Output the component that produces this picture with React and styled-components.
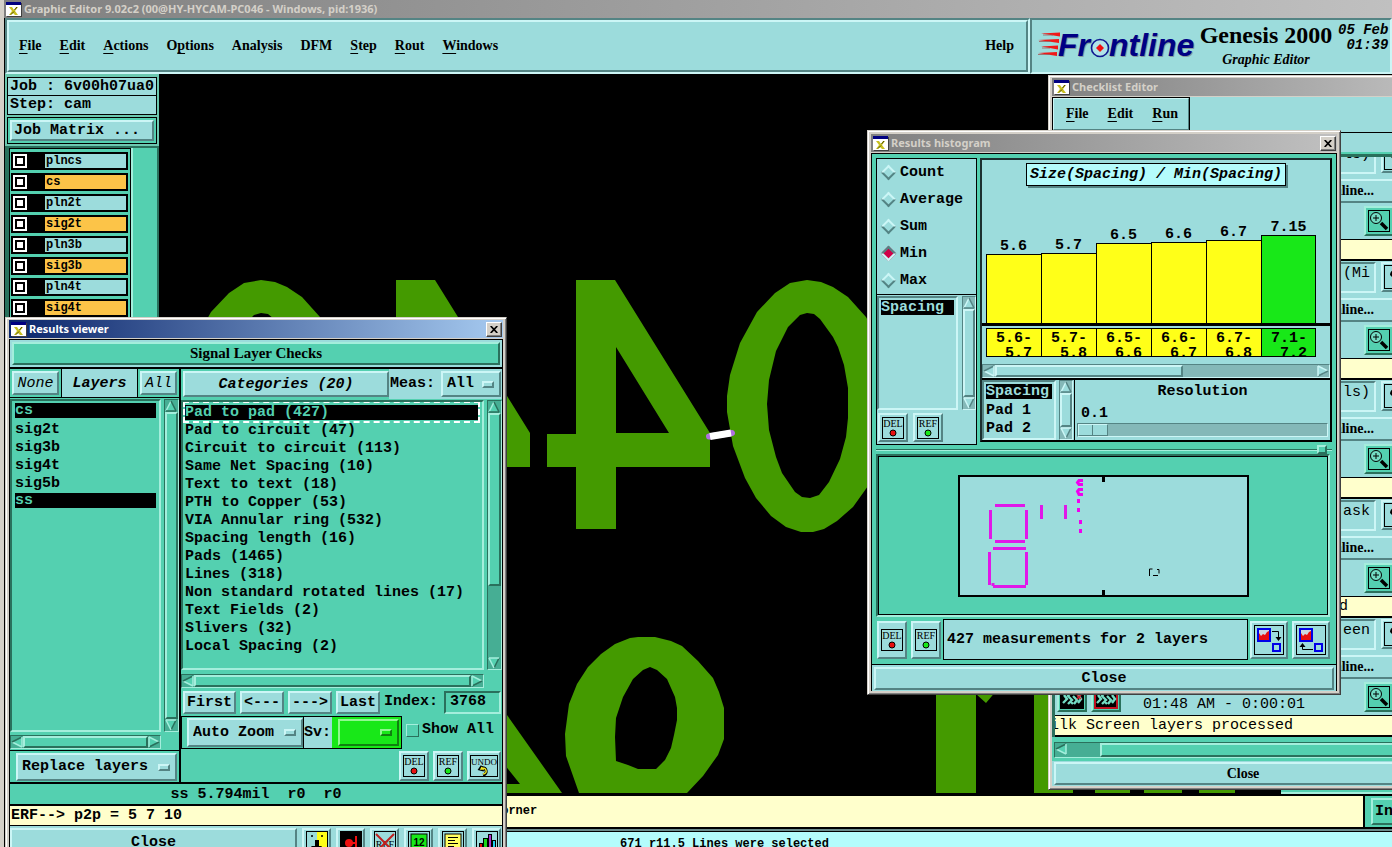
import React from "react";
import styled, { createGlobalStyle, css } from "styled-components";

const MONO = '"Liberation Mono", "Courier New", monospace';
const SERIF = '"Liberation Serif", "Times New Roman", serif';
const SANS = '"Noto Sans", "Open Sans", sans-serif';

const tones = {
  cyan: { face: "#9cdcdc", light: "#ccf6f6", dark: "#548484", trough: "#84b8b8" },
  green: { face: "#54d0b0", light: "#a4eedc", dark: "#2a705c", trough: "#46ae94" },
  lime: { face: "#18e818", light: "#90f890", dark: "#108010", trough: "#18e818" },
};

const GlobalStyle = createGlobalStyle`
  * { box-sizing: border-box; }
  body { margin: 0; background: #000; color: #000; font: bold 15px/18px ${MONO}; overflow: hidden; }
  button, input, select { font: inherit; color: inherit; margin: 0; border-radius: 0; }
  ul { list-style: none; margin: 0; padding: 0; }
`;

const raised = css`
  border: 2px solid;
  border-color: ${(p) => {
    const t = tones[p.$tone || "cyan"];
    return `${t.light} ${t.dark} ${t.dark} ${t.light}`;
  }};
  background: ${(p) => tones[p.$tone || "cyan"].face};
`;
const sunken = css`
  border: 2px solid;
  border-color: ${(p) => {
    const t = tones[p.$tone || "cyan"];
    return `${t.dark} ${t.light} ${t.light} ${t.dark}`;
  }};
  background: ${(p) => tones[p.$tone || "cyan"].face};
`;

/* ---------- main window ---------- */

const Desktop = styled.div`
  position: relative;
  display: flex;
  flex-direction: column;
  height: 100vh;
  min-height: 400px;
  overflow: hidden;
  border-left: 4px solid #d4d0c8;
  background: #000;
`;
const TitleBar = styled.header`
  display: flex;
  align-items: center;
  gap: 2px;
  height: 18px;
  flex: none;
  padding: 0 1px 0 2px;
  font: bold 11px/16px ${SANS};
  white-space: nowrap;
  overflow: hidden;
  color: ${(p) => (p.$active ? "#fff" : "#d4d0c8")};
  background: ${(p) =>
    p.$active ? "linear-gradient(90deg, #0a246a, #a6caf0)" : "linear-gradient(90deg, #808080, #c0c0c0)"};
`;
const TitleText = styled.span`
  flex: 1;
`;
const CloseBox = styled.button`
  display: flex;
  align-items: center;
  justify-content: center;
  width: 16px;
  height: 15px;
  padding: 0;
  border: 1px solid;
  border-color: #fff #404040 #404040 #fff;
  background: #d4d0c8;
  box-shadow: inset -1px -1px #808080;
`;
const TopRow = styled.div`
  display: flex;
  height: 56px;
  flex: none;
  margin-left: 1px;
`;
const MenuFrame = styled.div`
  ${sunken}
  flex: 1;
`;
const MenuBar = styled.nav`
  ${raised}
  display: flex;
  align-items: center;
  height: 100%;
  padding: 0 12px 0 10px;
  gap: 18px;
`;
const MenuItem = styled.button`
  padding: 0;
  border: 0;
  background: none;
  font: bold 14px/18px ${SERIF};
  margin-left: ${(p) => (p.$end ? "auto" : 0)};
  u { text-underline-offset: 3px; text-decoration-thickness: 1px; }
`;
const Brand = styled.div`
  ${sunken}
  display: flex;
  width: 362px;
  padding-left: 4px;
  overflow: hidden;
`;
const Product = styled.div`
  width: 136px;
  flex: none;
  text-align: center;
  font: italic bold 14px/20px ${SERIF};
`;
const ProductName = styled.div`
  font: bold 24px/30px ${SERIF};
  white-space: nowrap;
`;
const Clock = styled.div`
  flex: none;
  margin-left: 4px;
  padding-top: 3px;
  font: italic bold 14px/15px ${MONO};
  white-space: pre;
`;
const Work = styled.main`
  display: flex;
  flex: 1;
  min-height: 0;
  margin-left: 1px;
`;
const Sidebar = styled.aside`
  display: flex;
  flex-direction: column;
  width: 154px;
  flex: none;
  overflow: hidden;
  background: ${tones.green.dark};
`;
const JobPanel = styled.div`
  padding: 3px 2px 2px;
  background: #6cc8b0;
`;
const JobLine = styled.div`
  height: 19px;
  padding-left: 2px;
  border: 1px solid #000;
  background: ${tones.cyan.face};
  line-height: 18px;
  white-space: pre;
  & + & { border-top-width: 0; }
`;
const MatrixFrame = styled.div`
  margin-top: 2px;
  padding: 2px;
  border: 1px solid #000;
  background: ${tones.green.face};
`;
const Button = styled.button`
  ${raised}
  display: flex;
  align-items: center;
  justify-content: ${(p) => (p.$start ? "flex-start" : "center")};
  flex: ${(p) => (p.$grow ? 1 : "none")};
  width: ${(p) => (p.$w ? p.$w + "px" : "auto")};
  height: ${(p) => (p.$h || 23) + "px"};
  padding: ${(p) => (p.$low ? "2px 2px 0" : "0 2px")};
  white-space: pre;
  font-family: ${(p) => (p.$serif ? SERIF : MONO)};
  font-size: ${(p) => (p.$serif ? 14 : 15)}px;
  font-style: ${(p) => (p.$italic ? "italic" : "normal")};
  font-weight: ${(p) => (p.$light ? "normal" : "bold")};
`;
const LayerArea = styled.div`
  display: flex;
  flex: 1;
  gap: 2px;
  margin: 2px 2px 0 4px;
  background: ${tones.green.light};
`;
const LayerPanel = styled.ul`
  display: flex;
  flex-direction: column;
  gap: 3px;
  width: 122px;
  padding: 3px 2px 0 1px;
  border: 1px solid #000;
  border-bottom: 0;
  background: ${tones.green.face};
`;
const LayerGutter = styled.div`
  flex: 1;
  background: ${tones.green.face};
`;
const LayerRow = styled.li`
  display: flex;
  width: 117px;
  height: 18px;
  padding: 2px;
  background: #000;
`;
const LayerCheck = styled.input`
  appearance: none;
  width: 14px;
  height: 14px;
  border: 2px solid #fff;
  background: #fff;
  box-shadow: inset 0 0 0 2px #000;
`;
const LayerName = styled.label`
  flex: 1;
  margin-left: 18px;
  padding-left: 1px;
  background: ${(p) => (p.$signal ? "#fcc448" : tones.cyan.face)};
  font-size: 12px;
  line-height: 14px;
`;
const Canvas = styled.svg`
  flex: 1;
  min-width: 0;
  height: 100%;
  background: #000;
`;
const Footer = styled.footer`
  flex: none;
  margin-left: 1px;
  border-top: 2px solid #000;
  font-size: 12px;
`;
const PromptRow = styled.div`
  display: flex;
  height: 33px;
  border-bottom: 2px solid #000;
  background: #ffffcc;
`;
const PromptText = styled.div`
  flex: 1;
  padding-left: 489px;
  line-height: 30px;
`;
const UnitCell = styled.div`
  width: 29px;
  padding: 2px 0 2px 6px;
  border-left: 2px solid #000;
  background: ${tones.green.face};
  overflow: hidden;
`;
const StatusRow = styled.div`
  height: 18px;
  border-top: 2px solid #6c8c8c;
  padding-top: 4px;
  background: #b4fcfc;
  box-shadow: inset 0 1px #000;
  text-align: center;
  padding-left: 52px;
  line-height: 18px;
  overflow: hidden;
`;

/* ---------- shared window parts ---------- */

const Frame = styled.section`
  position: absolute;
  left: ${(p) => p.$x}px;
  top: ${(p) => p.$y}px;
  width: ${(p) => p.$w}px;
  padding: ${(p) => p.$top || 2}px 3px 3px;
  border: 1px solid;
  border-color: #d4d0c8 #404040 #404040 #d4d0c8;
  background: #d4d0c8;
  box-shadow: inset 1px 1px #fff, inset -1px -1px #808080;
`;
const Content = styled.div`
  margin-top: 1px;
  border: 1px solid #000;
  border-bottom: 0;
  background: ${(p) => tones[p.$tone].face};
`;
const ScrollTrack = styled.div`
  display: flex;
  flex-direction: ${(p) => (p.$vertical ? "column" : "row")};
  align-items: stretch;
  min-width: 0;
  border: 1px solid;
  border-color: ${(p) => `${tones[p.$tone].dark} ${tones[p.$tone].light} ${tones[p.$tone].light} ${tones[p.$tone].dark}`};
  background: ${(p) => tones[p.$tone].trough};
  svg { flex: none; }
`;
const ScrollThumb = styled.div`
  ${raised}
  flex: ${(p) => p.$size || 1};
`;
const ScrollRest = styled.div`
  flex: ${(p) => p.$size};
`;
const List = styled.ul`
  ${sunken}
  min-width: 0;
  padding: 1px ${(p) => p.$pad || 0}px 0;
  overflow: hidden;
`;
const Item = styled.li`
  height: 18px;
  padding-top: ${(p) => (p.$focus ? 2 : 1)}px;
  ${(p) => p.$focus && "margin: 0 4px 0 2px; outline: 2px dashed #fff;"}
`;
const ItemText = styled.span`
  display: block;
  height: 15px;
  line-height: ${(p) => (p.$on ? 16 : 18)}px;
  padding-left: ${(p) => (p.$inset ? 2 : 0)}px;
  white-space: nowrap;
  ${(p) => p.$on && css`background: #000; color: ${tones[p.$tone || "green"].face};`}
`;
const SelectWrap = styled.span`
  ${raised}
  display: flex;
  align-items: center;
  flex: ${(p) => (p.$grow ? 1 : "none")};
  width: ${(p) => (p.$w ? p.$w + "px" : "auto")};
  height: ${(p) => p.$h}px;
  padding-right: 5px;
`;
const Select = styled.select`
  appearance: none;
  flex: 1;
  min-width: 0;
  height: 100%;
  padding: 0 0 0 4px;
  border: 0;
  background: transparent;
`;
const Notch = styled.span`
  ${raised}
  width: 12px;
  height: 7px;
`;

/* ---------- results viewer ---------- */

const Strip = styled.div`
  height: 29px;
  padding: 2px;
  border-bottom: 2px solid #000;
  background: ${tones.cyan.face};
`;
const StripLabel = styled.div`
  ${raised}
  height: 23px;
  text-align: center;
  font: bold 15px/19px ${SERIF};
`;
const Panes = styled.div`
  display: flex;
  border-bottom: 2px solid #000;
`;
const LeftPane = styled.div`
  width: 171px;
  border-right: 2px solid #000;
`;
const RightPane = styled.div`
  flex: 1;
  min-width: 0;
`;
const LeftHead = styled.div`
  display: flex;
  height: 29px;
  border-bottom: 1px solid #000;
`;
const HeadCell = styled.div`
  padding: 2px;
`;
const HeadLabel = styled.div`
  flex: 1;
  border: 1px solid #000;
  border-width: 0 1px;
  background: ${tones.cyan.face};
  text-align: center;
  font-style: italic;
  line-height: 30px;
`;
const ListGrid = styled.div`
  display: grid;
  grid-template-columns: minmax(0, 1fr) 15px;
  grid-template-rows: ${(p) => p.$h}px 14px;
  gap: ${(p) => p.$gap || 3}px 3px;
  padding: 1px 0 ${(p) => p.$bottom || 0}px;
`;
const ReplaceRow = styled.div`
  display: flex;
  height: 32px;
  padding: 2px 2px 1px 6px;
  border-top: 1px solid #000;
`;
const RightHead = styled.div`
  display: flex;
  height: 30px;
`;
const CategoryCell = styled.div`
  display: flex;
  width: 208px;
  padding: 2px 0 2px 2px;
`;
const MeasCell = styled.div`
  display: flex;
  flex: 1;
  align-items: center;
  justify-content: space-between;
  padding-right: 1px;
  padding-left: 1px;
  background: ${tones.cyan.face};
`;
const NavRow = styled.div`
  display: flex;
  align-items: center;
  gap: 4px;
  height: 28px;
  padding: 0 1px 0 2px;
`;
const IndexField = styled.input`
  ${sunken}
  flex: 1;
  min-width: 0;
  height: 23px;
  margin-left: 2px;
  padding: 0 0 2px 4px;
`;
const ZoomRow = styled.div`
  display: flex;
  align-items: center;
  gap: 4px;
  height: 33px;
`;
const ZoomBox = styled.div`
  display: flex;
  width: 221px;
  height: 33px;
  border: 1px solid #000;
`;
const ZoomCell = styled.div`
  display: flex;
  flex: 1;
  padding: 1px 0 1px 5px;
  border-right: 1px solid #000;
`;
const SvLabel = styled.label`
  width: 28px;
  background: ${tones.cyan.face};
  line-height: 32px;
`;
const SvCell = styled.div`
  display: flex;
  width: 69px;
  padding: 2px 2px 2px 6px;
  background: ${tones.lime.face};
`;
const CheckLabel = styled.label`
  display: flex;
  align-items: center;
  gap: 3px;
  height: 28px;
  align-self: flex-start;
  white-space: nowrap;
`;
const Check = styled.input`
  ${raised}
  appearance: none;
  width: 13px;
  height: 13px;
  border-width: 1px;
`;
const ActionRow = styled.div`
  display: flex;
  justify-content: flex-end;
  gap: 4px;
  height: 33px;
  padding: 2px 1px 1px;
`;
const IconButton = styled.button`
  ${raised}
  display: flex;
  align-items: center;
  justify-content: center;
  flex: none;
  width: ${(p) => p.$w || 30}px;
  height: ${(p) => p.$h || 30}px;
  padding: 0;
`;
const InfoLine = styled.div`
  height: 22px;
  border-bottom: 2px solid #000;
  text-align: center;
  line-height: 22px;
  white-space: pre;
`;
const ErfLine = styled.div`
  height: 20px;
  padding-left: 1px;
  border-bottom: 1px solid #000;
  background: #ffffcc;
  line-height: 20px;
`;
const CloseRow = styled.div`
  display: flex;
  gap: 5px;
  padding: 2px 1px 1px 0;
  background: ${tones.cyan.face};
`;

/* ---------- histogram ---------- */

const HistBody = styled.div`
  padding: 4px 4px 2px;
`;
const HistTop = styled.div`
  display: flex;
  align-items: flex-start;
  gap: 3px;
  height: 287px;
`;
const HistLeft = styled.div`
  width: 101px;
  height: 287px;
  border: 1px solid #000;
  background: ${tones.cyan.face};
`;
const RadioSet = styled.fieldset`
  margin: 0;
  padding: 0;
  border: 0;
  border-bottom: 1px solid #000;
`;
const RadioLabel = styled.label`
  display: flex;
  align-items: center;
  gap: 6px;
  height: 27px;
  padding-left: 6px;
`;
const Diamond = styled.input`
  appearance: none;
  width: 11px;
  height: 11px;
  border: 2px solid;
  border-color: ${tones.cyan.light} ${tones.cyan.dark} ${tones.cyan.dark} ${tones.cyan.light};
  transform: rotate(45deg);
  &:checked {
    background: #d00048;
    border-color: ${tones.cyan.dark} ${tones.cyan.light} ${tones.cyan.light} ${tones.cyan.dark};
  }
`;
const HistLists = styled.div`
  display: grid;
  grid-template-columns: minmax(0, 1fr) 14px;
  gap: 4px;
  height: 115px;
  padding-top: 1px;
`;
const PairRow = styled.div`
  display: flex;
  gap: 5px;
  padding: 3px 1px 0;
`;
const HistRight = styled.div`
  flex: 1;
  min-width: 0;
  border: 2px solid #000;
  border-color: #1c3030 #000 #000 #1c3030;
  background: ${tones.cyan.face};
`;
const ChartArea = styled.div`
  display: flex;
  flex-direction: column;
  justify-content: space-between;
  height: 166px;
  padding-top: 3px;
  border-bottom: 3px solid #000;
`;
const ChartTitle = styled.div`
  align-self: center;
  padding: 0 3px;
  border: 1px solid #000;
  background: #b4fcfc;
  box-shadow: 2px 2px ${tones.cyan.dark};
  font-style: italic;
  line-height: 21px;
`;
const Bars = styled.div`
  display: flex;
  align-items: flex-end;
  padding-left: 4px;
`;
const BarColumn = styled.div`
  width: 55px;
  text-align: center;
  line-height: 14px;
`;
const Bar = styled.div`
  border: 1px solid #000;
  border-width: 1px 0 0 1px;
  background: ${(p) => (p.$last ? "#18e818" : "#ffff18")};
  border-right-width: ${(p) => (p.$last ? "1px" : 0)};
`;
const Ranges = styled.div`
  display: flex;
  padding: 2px 0 7px 4px;
`;
const Range = styled.div`
  width: 55px;
  height: 29px;
  padding: 2px 0 0 9px;
  border: 1px solid #000;
  border-right-width: ${(p) => (p.$last ? "1px" : 0)};
  background: ${(p) => (p.$last ? "#18e818" : "#ffff18")};
  line-height: 15px;
  white-space: pre;
`;
const HistLower = styled.div`
  display: grid;
  grid-template-columns: 74px 14px minmax(0, 1fr);
  gap: 3px;
  height: 62px;
  border-top: 2px solid #000;
`;
const Resolution = styled.label`
  display: block;
  padding: 3px 2px 0;
  margin-left: -2px;
  border-left: 1px solid #000;
  text-align: center;
`;
const ResolutionValue = styled.div`
  padding-left: 4px;
  height: 22px;
  text-align: left;
  line-height: 26px;
`;
const Slider = styled.input`
  appearance: none;
  display: block;
  width: 100%;
  height: 14px;
  border: 1px solid;
  border-color: ${tones.cyan.dark} ${tones.cyan.light} ${tones.cyan.light} ${tones.cyan.dark};
  background: ${tones.cyan.trough};
  &::-webkit-slider-thumb {
    appearance: none;
    width: 30px;
    height: 12px;
    border: 1px solid;
    border-color: ${tones.cyan.light} ${tones.cyan.dark} ${tones.cyan.dark} ${tones.cyan.light};
    background: linear-gradient(90deg, transparent 13px, ${tones.cyan.dark} 13px 14px, transparent 14px) ${tones.cyan.face};
  }
`;
const SashRow = styled.div`
  display: flex;
  justify-content: flex-end;
  height: 9px;
  padding-right: 5px;
  background: linear-gradient(${tones.green.dark} 0 1px, ${tones.green.light} 1px 2px) 0 4px / 100% 2px no-repeat;
`;
const Sash = styled.span`
  ${raised}
  width: 10px;
  height: 9px;
`;
const Preview = styled.div`
  ${sunken}
  height: 163px;
  margin-right: 2px;
  padding-top: 19px;
  text-align: center;
  box-shadow: inset 1px 1px #000, inset -1px -1px #000;
`;
const MeasureRow = styled.div`
  display: flex;
  align-items: center;
  gap: 4px;
  padding: 2px 2px 2px 1px;
`;
const MeasureText = styled.div`
  flex: 1;
  height: 41px;
  padding-left: 3px;
  margin: 0 -2px;
  border: 1px solid #000;
  background: ${tones.cyan.face};
  line-height: 40px;
`;
const CloseStrip = styled.div`
  display: flex;
  padding: 2px 2px 1px;
  border-top: 1px solid #000;
  background: ${tones.cyan.face};
`;

/* ---------- checklist ---------- */

const CheckBody = styled.div`
  margin-top: 1px;
  background: ${tones.cyan.face};
`;
const SmallMenu = styled.nav`
  ${raised}
  display: flex;
  align-items: center;
  gap: 19px;
  width: 138px;
  height: 34px;
  padding-left: 12px;
  outline: 1px solid #000;
  outline-offset: -1px;
`;
const CheckHead = styled.div`
  height: 25px;
  margin-top: 1px;
  border-top: 1px solid #000;
  border-bottom: 3px solid ${tones.green.dark};
  box-shadow: inset 0 -2px ${tones.green.face};
`;
const Viewport = styled.div`
  display: flex;
  flex-direction: column;
  justify-content: flex-end;
  height: 580px;
  overflow: hidden;
  border-left: 3px solid ${tones.green.dark};
`;
const CheckItem = styled.div`
  flex: none;
  height: 119px;
`;
const NameRow = styled.div`
  display: flex;
  gap: 5px;
  height: 37px;
  padding: 1px 21px 5px 2px;
`;
const NameField = styled.input`
  ${sunken}
  flex: 1;
  min-width: 0;
  padding: 0 4px 8px;
  text-align: right;
  font-weight: normal;
`;
const StateRow = styled.div`
  height: 24px;
  padding-right: 58px;
  border-top: 2px solid ${tones.cyan.light};
  border-bottom: 2px solid ${tones.cyan.dark};
  text-align: right;
  font: bold 14px/20px ${SERIF};
`;
const RunRow = styled.div`
  display: flex;
  align-items: center;
  gap: 4px;
  height: 36px;
  padding: 0 38px 0 2px;
`;
const RunTime = styled.span`
  margin: 16px auto 0 18px;
  font-weight: normal;
`;
const Spacer = styled.span`
  flex: 1;
`;
const Report = styled.div`
  height: 22px;
  padding-right: 84px;
  border-top: 1px solid #000;
  border-bottom: 2px solid #000;
  background: #ffffcc;
  font-weight: normal;
  text-align: ${(p) => (p.$scrolled ? "left" : "right")};
  text-indent: ${(p) => (p.$scrolled ? "-14px" : 0)};
  line-height: 19px;
  white-space: nowrap;
`;
const CheckScroll = styled.div`
  display: flex;
  height: 24px;
  padding: 5px 2px 3px;
  background: ${tones.green.face};
`;
const WideTrack = styled(ScrollTrack)`
  flex: 1;
`;
const CheckClose = styled.div`
  display: flex;
  padding: 1px 0 1px 2px;
`;

/* ---------- icons ---------- */

const AppIcon = () => (
  <svg width="16" height="15" viewBox="0 0 16 15" aria-hidden="true">
    <rect x="1" y="1" width="15" height="14" fill="#404040" />
    <rect width="15" height="14" fill="#fff" />
    <rect width="15" height="3" fill="#000080" />
    <path d="M3 5h3l2 3 2-3h2l-3 4 3 4h-3l-2-2-2 2H3l3-4z" fill="#c8c020" />
    <path d="M5 12.500l3-3M8.500 8l2.500-3" stroke="#505000" />
  </svg>
);
const CloseGlyph = () => (
  <svg width="8" height="7" viewBox="0 0 8 7" aria-hidden="true">
    <path d="M.7 0l6.600 7M7.300 0L.7 7" stroke="#000" strokeWidth="1.700" />
  </svg>
);

const Arrow = ({ dir, tone }) => {
  const t = tones[tone];
  const turn = { up: 0, right: 90, down: 180, left: 270 }[dir];
  return (
    <svg width="12" height="12" viewBox="0 0 12 12" aria-hidden="true">
      <g transform={`rotate(${turn} 6 6)`}>
        <path d="M6 1L11 11H1z" fill={t.face} />
        <path d="M1 11L6 1" stroke={dir === "down" ? t.dark : t.light} strokeWidth="1.500" />
        <path d="M6 1l5 10" stroke={dir === "down" ? t.light : t.dark} strokeWidth="1.500" />
        <path d="M1 11h10" stroke={dir === "up" ? t.dark : t.light} strokeWidth="1.500" />
      </g>
    </svg>
  );
};

const Scrollbar = ({ vertical, tone = "green", thumb = 1, rest = 0 }) => (
  <ScrollTrack $vertical={vertical} $tone={tone}>
    <Arrow dir={vertical ? "up" : "left"} tone={tone} />
    <ScrollThumb $tone={tone} $size={thumb} />
    {rest > 0 && <ScrollRest $size={rest} />}
    <Arrow dir={vertical ? "down" : "right"} tone={tone} />
  </ScrollTrack>
);

const TagIcon = ({ label, color, wide }) => {
  const w = wide ? 28 : 22;
  return (
    <svg width={w} height="24" viewBox={`0 0 ${w} 24`} aria-hidden="true">
      <rect x=".5" y="1.500" width={w - 1} height="21" fill="none" stroke="#000" />
      <text x={w / 2} y="11" textAnchor="middle" fontFamily="Liberation Serif, serif" fontWeight="normal" fontSize={wide ? 9 : 10}>
        {label}
      </text>
      {color ? (
        <circle cx={w / 2} cy="17" r="3" fill={color} stroke="#000" />
      ) : (
        <g fill="none" transform="translate(1 0)">
          <path d="M11 12l-2 3 4 1M10 14c6-1 7 6 2 7" stroke="#000" strokeWidth="3" />
          <path d="M11 13l-1 2 3 0M10 14c6-1 7 6 2 6" stroke="#f0e820" strokeWidth="1.400" />
        </g>
      )}
    </svg>
  );
};

const ChartSwapIcon = ({ back }) => (
  <svg width="30" height="30" viewBox="0 0 30 30" aria-hidden="true">
    <rect x=".5" y=".5" width="29" height="29" fill="none" stroke="#000" />
    <rect x="4" y="4" width="12" height="12" fill="#ccd8e0" stroke="#0000e8" strokeWidth="2" />
    <path d="M5 15V8l2 3 2-2 2 1 2-3 2-1v9z" fill="#e81010" />
    <rect x="19" y="19" width="7" height="7" fill="none" stroke="#0000e8" strokeWidth="2" />
    {back ? (
      <g>
        <path d="M17 24.500H6.500V20" fill="none" stroke="#000" />
        <path d="M6.500 18l3 4h-6z" />
      </g>
    ) : (
      <g>
        <path d="M18 6.500h6.500V12" fill="none" stroke="#000" />
        <path d="M24.500 16l3-4h-6z" />
      </g>
    )}
  </svg>
);

const MagnifierIcon = () => (
  <svg width="22" height="22" viewBox="0 0 22 22" aria-hidden="true">
    <rect x=".5" y=".5" width="21" height="21" fill="none" stroke="#000" />
    <circle cx="8" cy="8" r="5.500" fill="#74dcc4" stroke="#000" />
    <path d="M8 5v6M5 8h6" stroke="#000" />
    <path d="M13 13l6 6" stroke="#000" strokeWidth="3.600" />
  </svg>
);
const HandIcon = () => (
  <svg width="24" height="24" viewBox="0 0 24 24" aria-hidden="true">
    <rect x=".5" y=".5" width="23" height="23" fill="none" stroke="#000" />
    <path d="M6 10c0-7 10-7 10 0v3H9z" />
  </svg>
);
const GearIcon = ({ red }) => (
  <svg width="24" height="24" viewBox="0 0 24 24" aria-hidden="true">
    <rect x="1" y="1" width="22" height="22" fill="#000" stroke={red ? "#c01020" : "#000"} strokeWidth="2" />
    <path d="M3 18l4-4-3-4M8 19l4-4-4-4 3-4M13 19l-2-2M13 11l4 4-3 4M18 10l3 4-3 4" fill="none" stroke="#74dcc4" strokeWidth="2.400" />
    {!red && <path d="M17 10l4 4m0-4l-4 4" stroke="#d02030" strokeWidth="1.500" />}
  </svg>
);

const tools = {
  split: (
    <g>
      <rect x="11" y="1" width="10" height="22" fill="#ffff18" />
      <path d="M9 9h4v6h3l-5 7-6-7h4z" />
      <circle cx="6" cy="5" r="1" /><circle cx="16" cy="5" r="1" />
    </g>
  ),
  dot: (
    <g>
      <rect x="1" y="1" width="20" height="22" />
      <circle cx="9" cy="12" r="4" fill="#f01010" />
      <path d="M16 5v14M10 12h6" stroke="#f01010" strokeWidth="2" />
    </g>
  ),
  ref: (
    <g>
      <text x="11" y="17" textAnchor="middle" fontFamily="Liberation Serif, serif" fontWeight="normal" fontSize="10">REF</text>
      <path d="M2 3l18 18M20 3L2 21" stroke="#c02020" strokeWidth="2" />
    </g>
  ),
  half: (
    <g>
      <rect x="3" y="3" width="16" height="18" fill="#18e818" stroke="#000" />
      <text x="11" y="15" textAnchor="middle" fontFamily="Liberation Sans, sans-serif" fontSize="10">12</text>
    </g>
  ),
  page: (
    <g>
      <rect x="3" y="3" width="16" height="18" fill="#ffff60" stroke="#000" />
      <path d="M6 6.500h10M6 9.500h7M6 12.500h10M6 15.500h6" stroke="#000" />
    </g>
  ),
  chart: (
    <g stroke="#000">
      <rect x="3.500" y="12.500" width="3" height="10" fill="#e01010" />
      <rect x="7.500" y="7.500" width="4" height="15" fill="#18d818" />
      <rect x="12.500" y="3.500" width="3" height="19" fill="#b030d0" />
      <rect x="16.500" y="9.500" width="3" height="13" fill="#20d0f0" />
    </g>
  ),
};
const ToolIcon = ({ kind }) => (
  <svg width="22" height="24" viewBox="0 0 22 24" aria-hidden="true">
    {tools[kind]}
    <rect x=".5" y=".5" width="21" height="23" fill="none" stroke="#000" />
  </svg>
);

const LogoSvg = styled.svg`
  flex: none;
`;
const Logo = () => (
  <LogoSvg width="162" height="48" viewBox="1035 21 162 48" role="img" aria-label="Frontline">
    <g fill="#f01818">
      <path d="M1040 34.500l19-1v4z" /><path d="M1037 41l21-1v4z" />
      <path d="M1040 47.500l17-1v4z" /><path d="M1037 54l19-1v4z" />
    </g>
    <g stroke="#a05858" strokeWidth=".8">
      <path d="M1042 36h10M1038 42.500h12M1041 49h8M1037 55.500h12" />
    </g>
    {[["#889c9c", 1], ["#000084", 0]].map(([fill, d]) => (
      <g key={fill} fill={fill} fontFamily="Liberation Sans, sans-serif" fontStyle="italic" fontWeight="bold" fontSize="32">
        <text x={1057 + d} y={57 + d}>Fr</text>
        <text x={1108 + d} y={57 + d}>ntline</text>
      </g>
    ))}
    <circle cx="1099" cy="49" r="8.500" fill="#b0e4e8" stroke="#101890" strokeWidth="1.600" />
    <path d="M1099 45l4 4-4 4-4-4z" fill="#f01010" />
  </LogoSvg>
);

/* ---------- data ---------- */

const mainMenu = [["F", "ile"], ["E", "dit"], ["A", "ctions"], ["", "Options"], ["", "Analysis"], ["", "DFM"], ["S", "tep"], ["R", "out"], ["W", "indows"]];
const layers = ["plncs", "cs", "pln2t", "sig2t", "pln3b", "sig3b", "pln4t", "sig4t"];
const viewerLayers = ["cs", "sig2t", "sig3b", "sig4t", "sig5b", "ss"];
const categories = [
  "Pad to pad (427)", "Pad to circuit (47)", "Circuit to circuit (113)", "Same Net Spacing (10)",
  "Text to text (18)", "PTH to Copper (53)", "VIA Annular ring (532)", "Spacing length (16)",
  "Pads (1465)", "Lines (318)", "Non standard rotated lines (17)", "Text Fields (2)", "Slivers (32)",
  "Local Spacing (2)",
];
const bars = [
  { value: "5.6", height: 69, range: "5.6-\n 5.7" },
  { value: "5.7", height: 70, range: "5.7-\n 5.8" },
  { value: "6.5", height: 80, range: "6.5-\n 6.6" },
  { value: "6.6", height: 81, range: "6.6-\n 6.7" },
  { value: "6.7", height: 83, range: "6.7-\n 6.8" },
  { value: "7.15", height: 88, range: "7.1-\n 7.2" },
];
const checks = [
  { name: "ls)" },
  { name: "(Mi" },
  { name: "ls)" },
  { name: "ask", report: "processed" },
  { name: "een", report: "Silk Screen layers processed", time: "01:48 AM - 0:00:01" },
];

const Mnemonic = ({ parts: [key, rest] }) => {
  if (rest === "Options") return <>O<u>p</u>tions</>;
  return <>{key && <u>{key}</u>}{rest}</>;
};

const Artwork = () => (
  <Canvas aria-label="Board artwork">
    <g transform="translate(-159 -74)">
      <g fill="#449a00" fillRule="evenodd">
        {[0, -180].map((dx) => (
          <path
            key={dx}
            transform={`translate(${dx} 0)`}
            d="M576 280H615L710 433V467H616V529H576V467H547V434H576ZM616 347V433H669Z"
          />
        ))}
        {[0, -546].map((dx) => (
          <path
            key={dx}
            transform={`translate(${dx} 0)`}
            d="M807 280L821 282L833 287L848 297L866 317L881 345L887 380V430L881 462L868 486L853 507L837 521L824 529L813 532H801L786 527L771 516L756 498L745 478L733 446L727 412V396L730 375L740 343L757 312L775 293L790 283Z
               M807 313L800 315L788 327L776 351L769 380L767 404L769 430L776 457L782 473L795 492L802 497L810 498L819 495L829 482L840 459L846 437L848 418V388L844 365L838 347L833 337L820 319L814 314Z"
          />
        ))}
        <path d="M638 637H655L671 641L682 646L698 661L713 678L719 692L724 708V739L718 755L703 776L687 793H579L566 756L565 734L569 704L577 684L588 667L601 654L615 644L630 638Z
                 M650 667L643 670L633 679L623 697L616 718L615 737L616 761L628 765L638 769H656L665 760L671 748L674 735L677 720V708L675 697L667 679L657 670Z" />
        <path d="M480 677L507 715L562 793H480ZM480 734L520 784H480Z" />
        <path d="M936 690H976V793H936ZM976 690H997L986 703L976 694ZM1034 690H1073V793H1034ZM1095 780H1130V793H1095ZM1144 780H1182V793H1144ZM1199 780H1235V793H1199Z" />
      </g>
      <path d="M709 436.500L732 433" stroke="#b070e0" strokeWidth="6" strokeLinecap="round" />
      <path d="M710 436.500L731 433" stroke="#fff" strokeWidth="7" />
      <path d="M1281 790h111v2h-111z" fill={tones.green.face} />
      <path d="M1281 792h111v2h-111z" fill={tones.green.light} />
    </g>
  </Canvas>
);

const Window = ({ title, active, closable, children, ...frame }) => (
  <Frame {...frame}>
    <TitleBar $active={active}>
      <AppIcon />
      <TitleText>{title}</TitleText>
      {closable && <CloseBox aria-label={`Close ${title}`}><CloseGlyph /></CloseBox>}
    </TitleBar>
    {children}
  </Frame>
);

const ChecklistEditor = () => (
  <Window title="Checklist Editor" $x={1044} $y={75} $w={388}>
    <CheckBody>
      <SmallMenu>
        {[["F", "ile"], ["E", "dit"], ["R", "un"]].map((m) => (
          <MenuItem key={m[0]}><Mnemonic parts={m} /></MenuItem>
        ))}
      </SmallMenu>
      <CheckHead />
      <Viewport>
        {checks.map((c, i) => (
          <CheckItem key={i}>
            <NameRow>
              <NameField aria-label="Check name" defaultValue={c.name} />
              <IconButton aria-label="Pick"><HandIcon /></IconButton>
            </NameRow>
            <StateRow>Online...</StateRow>
            <RunRow>
              {c.time && (
                <>
                  <IconButton $tone="green" aria-label="Run check"><GearIcon /></IconButton>
                  <IconButton $tone="green" aria-label="Stop check"><GearIcon red /></IconButton>
                  <RunTime>{c.time}</RunTime>
                </>
              )}
              <Spacer />
              <IconButton $tone="green" aria-label="View results"><MagnifierIcon /></IconButton>
            </RunRow>
            <Report $scrolled={!!c.time}>{c.report}</Report>
          </CheckItem>
        ))}
      </Viewport>
      <CheckScroll>
        <WideTrack $tone="green">
          <Arrow dir="left" tone="green" />
          <ScrollRest $size={33} />
          <ScrollThumb $tone="green" $size={330} />
        </WideTrack>
      </CheckScroll>
      <CheckClose>
        <Button $grow $serif $h={23}>Close</Button>
      </CheckClose>
    </CheckBody>
  </Window>
);

const Histogram = () => (
  <Window title="Results histogram" closable $x={863} $y={130} $w={474} $top={3}>
    <Content $tone="green">
      <HistBody>
        <HistTop>
          <HistLeft>
            <RadioSet>
              {["Count", "Average", "Sum", "Min", "Max"].map((name) => (
                <RadioLabel key={name}>
                  <Diamond type="radio" name="stat" defaultChecked={name === "Min"} />
                  {name}
                </RadioLabel>
              ))}
            </RadioSet>
            <HistLists>
              <List $pad={2}>
                <Item><ItemText $on $tone="cyan">Spacing</ItemText></Item>
              </List>
              <Scrollbar vertical tone="cyan" />
            </HistLists>
            <PairRow>
              <IconButton $h={29} aria-label="Delete"><TagIcon label="DEL" color="#e81010" /></IconButton>
              <IconButton $h={29} aria-label="Reference"><TagIcon label="REF" color="#18e818" /></IconButton>
            </PairRow>
          </HistLeft>
          <HistRight>
            <ChartArea>
              <ChartTitle>Size(Spacing) / Min(Spacing)</ChartTitle>
              <Bars>
                {bars.map((b, i) => (
                  <BarColumn key={b.value}>
                    {b.value}
                    <Bar $last={i === bars.length - 1} style={{ height: b.height }} />
                  </BarColumn>
                ))}
              </Bars>
            </ChartArea>
            <Ranges>
              {bars.map((b, i) => (
                <Range key={b.value} $last={i === bars.length - 1}>{b.range}</Range>
              ))}
            </Ranges>
            <Scrollbar tone="cyan" thumb={187} rest={136} />
            <HistLower>
              <List $pad={2}>
                {["Spacing", "Pad 1", "Pad 2"].map((name, i) => (
                  <Item key={name}><ItemText $on={i === 0} $tone="cyan">{name}</ItemText></Item>
                ))}
              </List>
              <Scrollbar vertical tone="cyan" />
              <Resolution>
                Resolution
                <ResolutionValue>0.1</ResolutionValue>
                <Slider type="range" min="0" max="10" defaultValue="0" />
              </Resolution>
            </HistLower>
          </HistRight>
        </HistTop>
        <SashRow><Sash $tone="green" /></SashRow>
        <Preview $tone="green">
          <svg width="291" height="122" viewBox="958 475 291 122" aria-label="Measurement map">
            <rect x="959" y="476" width="289" height="120" fill={tones.cyan.face} stroke="#000" strokeWidth="2" />
            <path d="M1103.500 477v5M1103.500 590v5" stroke="#000" strokeWidth="3" />
            <path
              d="M995 505.500h30M990.500 510v29M1026.500 510v29M995 541.500h30M993 548.500h33M989.500 552v33M1026.500 552v33M993 586.500h33M993 583v3M1041.500 505v14M1065.500 505v14"
              stroke="#e018e8" strokeWidth="3" fill="none"
            />
            <path
              d="M1083 480.500h-4l-1.500 2 1.500 2h4M1083 489.500h-4l-1.500 2 1.500 3h4M1078.500 499v4M1078.500 508v4M1080.500 520v4M1080.500 529v4"
              stroke="#f000f0" strokeWidth="3" fill="none"
            />
            <path d="M1149.500 576v-7h3M1157 569.500h2v4M1153 575.500h5" stroke="#000" fill="none" />
          </svg>
        </Preview>
        <MeasureRow>
          <IconButton $h={38} aria-label="Delete"><TagIcon label="DEL" color="#e81010" /></IconButton>
          <IconButton $h={38} aria-label="Reference"><TagIcon label="REF" color="#18e818" /></IconButton>
          <MeasureText>427 measurements for 2 layers</MeasureText>
          <IconButton $w={38} $h={38} aria-label="Chart to layer"><ChartSwapIcon /></IconButton>
          <IconButton $w={38} $h={38} aria-label="Layer to chart"><ChartSwapIcon back /></IconButton>
        </MeasureRow>
      </HistBody>
      <CloseStrip><Button $grow $h={23}>Close</Button></CloseStrip>
    </Content>
  </Window>
);

const ResultsViewer = () => (
  <Window title="Results viewer" active closable $x={1} $y={317} $w={502}>
    <Content $tone="green">
      <Strip><StripLabel $tone="green">Signal Layer Checks</StripLabel></Strip>
      <Panes>
        <LeftPane>
          <LeftHead>
            <HeadCell><Button $w={47} $h={24} $italic $light $low>None</Button></HeadCell>
            <HeadLabel>Layers</HeadLabel>
            <HeadCell><Button $w={37} $h={24} $italic $light $low>All</Button></HeadCell>
          </LeftHead>
          <ListGrid $h={333} $bottom={1}>
            <List $tone="green" $pad={3}>
              {viewerLayers.map((name) => (
                <Item key={name}><ItemText $on={name === "cs" || name === "ss"}>{name}</ItemText></Item>
              ))}
            </List>
            <Scrollbar vertical />
            <Scrollbar />
          </ListGrid>
          <ReplaceRow>
            <SelectWrap $grow $h={28}>
              <Select aria-label="Layer mode"><option>Replace layers</option></Select>
              <Notch />
            </SelectWrap>
          </ReplaceRow>
        </LeftPane>
        <RightPane>
          <RightHead>
            <CategoryCell><Button $grow $low $h={26} $italic>Categories (20)</Button></CategoryCell>
            <MeasCell>
              <label htmlFor="meas">Meas:</label>
              <SelectWrap $w={60} $h={26}>
                <Select id="meas"><option>All</option></Select>
                <Notch />
              </SelectWrap>
            </MeasCell>
          </RightHead>
          <ListGrid $h={270} $gap={4}>
            <List $tone="green">
              {categories.map((name, i) => (
                <Item key={name} $focus={i === 0}><ItemText $inset={i > 0} $on={i === 0}>{name}</ItemText></Item>
              ))}
            </List>
            <Scrollbar vertical thumb={172} rest={72} />
            <Scrollbar />
          </ListGrid>
          <NavRow>
            <Button $low>First</Button>
            <Button $low>{"<---"}</Button>
            <Button $low>{"--->"}</Button>
            <Button $low>Last</Button>
            <label htmlFor="index">Index:</label>
            <IndexField id="index" $tone="green" defaultValue="3768" />
          </NavRow>
          <ZoomRow>
            <ZoomBox>
              <ZoomCell>
                <SelectWrap $grow $h={29}>
                  <Select aria-label="Zoom mode"><option>Auto Zoom</option></Select>
                  <Notch />
                </SelectWrap>
              </ZoomCell>
              <SvLabel htmlFor="sv">Sv:</SvLabel>
              <SvCell>
                <SelectWrap $tone="lime" $grow $h={27}>
                  <Select id="sv"><option> </option></Select>
                  <Notch $tone="lime" />
                </SelectWrap>
              </SvCell>
            </ZoomBox>
            <CheckLabel><Check type="checkbox" $tone="green" />Show All</CheckLabel>
          </ZoomRow>
          <ActionRow>
            <IconButton aria-label="Delete"><TagIcon label="DEL" color="#e81010" /></IconButton>
            <IconButton aria-label="Reference"><TagIcon label="REF" color="#18e818" /></IconButton>
            <IconButton $w={34} aria-label="Undo"><TagIcon label="UNDO" wide /></IconButton>
          </ActionRow>
        </RightPane>
      </Panes>
      <InfoLine>{"ss 5.794mil  r0  r0"}</InfoLine>
      <ErfLine>{"ERF--> p2p = 5 7 10"}</ErfLine>
      <CloseRow>
        <Button $grow $h={30}>Close</Button>
        {Object.keys(tools).map((kind) => (
          <IconButton key={kind} $w={29} aria-label={kind}><ToolIcon kind={kind} /></IconButton>
        ))}
      </CloseRow>
    </Content>
  </Window>
);

export default function App() {
  return (
    <Desktop>
      <GlobalStyle />
      <TitleBar>
        <AppIcon />
        <TitleText>Graphic Editor 9.02c2 (00@HY-HYCAM-PC046 - Windows, pid:1936)</TitleText>
      </TitleBar>
      <TopRow>
        <MenuFrame>
          <MenuBar>
            {mainMenu.map((m) => (
              <MenuItem key={m[1]}><Mnemonic parts={m} /></MenuItem>
            ))}
            <MenuItem $end>Help</MenuItem>
          </MenuBar>
        </MenuFrame>
        <Brand>
          <Logo />
          <Product>
            <ProductName>Genesis 2000</ProductName>
            Graphic Editor
          </Product>
          <Clock>{"05 Feb\n 01:39"}</Clock>
        </Brand>
      </TopRow>
      <Work>
        <Sidebar>
          <JobPanel>
            <JobLine>Job : 6v00h07ua0</JobLine>
            <JobLine>Step: cam</JobLine>
            <MatrixFrame><Button $start $w={144} $h={21}>Job Matrix ...</Button></MatrixFrame>
          </JobPanel>
          <LayerArea>
            <LayerPanel>
              {layers.map((name, i) => (
                <LayerRow key={name}>
                  <LayerCheck type="checkbox" id={name} />
                  <LayerName htmlFor={name} $signal={i % 2 === 1}>{name}</LayerName>
                </LayerRow>
              ))}
            </LayerPanel>
            <LayerGutter />
          </LayerArea>
        </Sidebar>
        <Artwork />
      </Work>
      <Footer>
        <PromptRow>
          <PromptText>corner</PromptText>
          <UnitCell><Button $tone="green" $h={27} $w={50} $start>Inch</Button></UnitCell>
        </PromptRow>
        <StatusRow>671 r11.5 Lines were selected</StatusRow>
      </Footer>
      <ChecklistEditor />
      <Histogram />
      <ResultsViewer />
    </Desktop>
  );
}
